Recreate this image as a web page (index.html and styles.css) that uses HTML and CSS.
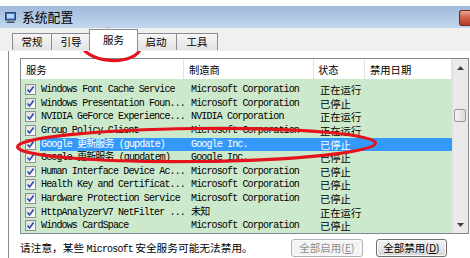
FILE: index.html
```html
<!DOCTYPE html>
<html lang="zh-CN">
<head>
    <meta charset="UTF-8">
    <title>系统配置</title>
    <link rel="stylesheet" href="styles.css">
</head>
<body>
    <div class="window">
        <div class="titlebar">
            <svg class="app-icon" width="11" height="11" viewBox="0 0 11 11">
                <rect x="0.5" y="0.5" width="10" height="7.5" fill="#3f6fb8" stroke="#24487c"/>
                <rect x="2" y="2" width="7" height="4.5" fill="#bcd6f2"/>
                <rect x="3" y="8" width="5" height="1.5" fill="#7a8594"/>
                <rect x="1.5" y="9.5" width="8" height="1.5" fill="#4d5663"/>
            </svg>
            <span class="title">系统配置</span>
            <div class="close"></div>
        </div>

        <div class="tabs">
            <div class="tab t-first">常规</div>
            <div class="tab">引导</div>
            <div class="tab active">服务</div>
            <div class="tab t-wide">启动</div>
            <div class="tab t-wide">工具</div>
        </div>

        <div class="panel">
            <div class="list">
                <div class="list-main">
                    <div class="list-head">
                        <div class="hcol h-name">服务</div>
                        <div class="hcol h-maker">制造商</div>
                        <div class="hcol h-state">状态</div>
                        <div class="hcol h-date">禁用日期</div>
                    </div>
                    <div class="list-body">
                        <div class="row">
                            <span class="check"><svg width="9" height="9" viewBox="0 0 9 9"><path d="M1.5 4.5 L3.6 7 L7.6 1.6" /></svg></span>
                            <div class="cells"><span class="name">Windows Font Cache Service</span><span class="maker">Microsoft Corporation</span><span class="state">正在运行</span></div>
                        </div>
                        <div class="row">
                            <span class="check"><svg width="9" height="9" viewBox="0 0 9 9"><path d="M1.5 4.5 L3.6 7 L7.6 1.6" /></svg></span>
                            <div class="cells"><span class="name">Windows Presentation Foun...</span><span class="maker">Microsoft Corporation</span><span class="state">已停止</span></div>
                        </div>
                        <div class="row">
                            <span class="check"><svg width="9" height="9" viewBox="0 0 9 9"><path d="M1.5 4.5 L3.6 7 L7.6 1.6" /></svg></span>
                            <div class="cells"><span class="name">NVIDIA GeForce Experience...</span><span class="maker">NVIDIA Corporation</span><span class="state">正在运行</span></div>
                        </div>
                        <div class="row">
                            <span class="check"><svg width="9" height="9" viewBox="0 0 9 9"><path d="M1.5 4.5 L3.6 7 L7.6 1.6" /></svg></span>
                            <div class="cells"><span class="name">Group Policy Client</span><span class="maker">Microsoft Corporation</span><span class="state">正在运行</span></div>
                        </div>
                        <div class="row selected">
                            <span class="check"><svg width="9" height="9" viewBox="0 0 9 9"><path d="M1.5 4.5 L3.6 7 L7.6 1.6" /></svg></span>
                            <div class="cells"><span class="name">Google 更新服务 (gupdate)</span><span class="maker">Google Inc.</span><span class="state">已停止</span></div>
                        </div>
                        <div class="row">
                            <span class="check"><svg width="9" height="9" viewBox="0 0 9 9"><path d="M1.5 4.5 L3.6 7 L7.6 1.6" /></svg></span>
                            <div class="cells"><span class="name">Google 更新服务 (gupdatem)</span><span class="maker">Google Inc.</span><span class="state">已停止</span></div>
                        </div>
                        <div class="row">
                            <span class="check"><svg width="9" height="9" viewBox="0 0 9 9"><path d="M1.5 4.5 L3.6 7 L7.6 1.6" /></svg></span>
                            <div class="cells"><span class="name">Human Interface Device Ac...</span><span class="maker">Microsoft Corporation</span><span class="state">已停止</span></div>
                        </div>
                        <div class="row">
                            <span class="check"><svg width="9" height="9" viewBox="0 0 9 9"><path d="M1.5 4.5 L3.6 7 L7.6 1.6" /></svg></span>
                            <div class="cells"><span class="name">Health Key and Certificat...</span><span class="maker">Microsoft Corporation</span><span class="state">已停止</span></div>
                        </div>
                        <div class="row">
                            <span class="check"><svg width="9" height="9" viewBox="0 0 9 9"><path d="M1.5 4.5 L3.6 7 L7.6 1.6" /></svg></span>
                            <div class="cells"><span class="name">Hardware Protection Service</span><span class="maker">Microsoft Corporation</span><span class="state">已停止</span></div>
                        </div>
                        <div class="row">
                            <span class="check"><svg width="9" height="9" viewBox="0 0 9 9"><path d="M1.5 4.5 L3.6 7 L7.6 1.6" /></svg></span>
                            <div class="cells"><span class="name">HttpAnalyzerV7 NetFilter ...</span><span class="maker">未知</span><span class="state">正在运行</span></div>
                        </div>
                        <div class="row">
                            <span class="check"><svg width="9" height="9" viewBox="0 0 9 9"><path d="M1.5 4.5 L3.6 7 L7.6 1.6" /></svg></span>
                            <div class="cells"><span class="name">Windows CardSpace</span><span class="maker">Microsoft Corporation</span><span class="state">已停止</span></div>
                        </div>
                    </div>
                </div>
                <div class="scrollbar">
                    <div class="arrow"><svg width="7" height="4" viewBox="0 0 7 4"><path d="M0 4 L3.5 0 L7 4 Z" fill="#404040"/></svg></div>
                    <div class="track"><div class="thumb"></div></div>
                    <div class="arrow"><svg width="7" height="4" viewBox="0 0 7 4"><path d="M0 0 L3.5 4 L7 0 Z" fill="#404040"/></svg></div>
                </div>
            </div>

            <div class="footer">
                <span class="note">请注意，某些 <span class="mono">Microsoft</span> 安全服务可能无法禁用。</span>
                <div class="buttons">
                    <button class="btn" disabled>全部启用(<u>E</u>)</button>
                    <button class="btn">全部禁用(<u>D</u>)</button>
                </div>
            </div>
        </div>
    </div>

    <svg class="marks" width="470" height="258" viewBox="0 0 470 258">
        <ellipse cx="111" cy="45" rx="29.5" ry="15.5" transform="rotate(4 111 45)" />
        <ellipse cx="196.5" cy="145" rx="179" ry="16.5" transform="rotate(-0.6 196.5 145)" />
    </svg>
</body>
</html>
```

FILE: styles.css
```css
body {
    margin: 0;
    width: 470px;
    height: 258px;
    overflow: hidden;
    position: relative;
    background-color: #f0f0f0;
    font-family: "Noto Sans CJK SC", sans-serif;
    color: #000;
}

.window {
    padding-top: 6px;
    background: #fff;
}

/* title bar */
.titlebar {
    height: 22px;
    display: flex;
    align-items: center;
    background: linear-gradient(#9fb9d9, #c3d8ef);
}

.app-icon {
    margin-left: 5px;
    margin-top: 1px;
}

.title {
    margin-left: 6px;
    font-size: 12.8px;
    line-height: 16px;
}

/* only the left edge of the close button is in view */
.close {
    margin-left: auto;
    align-self: flex-start;
    margin-top: 4px;
    width: 10px;
    height: 14px;
    border: 1px solid #6d2a20;
    border-right: none;
    border-radius: 3px 0 0 3px;
    background: linear-gradient(#e9a693, #d0634c 45%, #b93a26);
}

/* tabs */
.tabs {
    height: 23px;
    margin-bottom: -1px;
    display: flex;
    align-items: flex-end;
    background: #f0f0f0;
    position: relative;
    z-index: 1;
}

.tab {
    width: 38px;
    height: 16px;
    margin-bottom: 1px;
    margin-left: -1px;
    border: 1px solid #898c95;
    border-bottom: none;
    background: linear-gradient(#f6f6f6, #e3e3e3);
    font-size: 10.5px;
    line-height: 16px;
    text-align: center;
}

.t-first {
    margin-left: 12px;
}

.t-wide {
    width: 40px;
}

.tab.active {
    width: 47px;
    height: 21px;
    margin-bottom: 0;
    margin-left: -2px;
    margin-right: -2px;
    background: #fff;
    line-height: 19px;
    position: relative;
    z-index: 2;
}

/* panel */
.panel {
    margin-left: 8px;
    border-top: 1px solid #898c95;
    border-left: 1px solid #898c95;
    background: #fff;
    padding: 7px 0 0 11px;
    height: 200px;
}

.list {
    width: 447px;
    height: 174px;
    border: 1px solid #828790;
    display: flex;
}

.list-main {
    width: 431px;
    display: flex;
    flex-direction: column;
}

.list-head {
    height: 20px;
    display: grid;
    grid-template-columns: 163px 130px 51px 87px;
    background: #fff;
}

.hcol {
    border-right: 1px solid #e3e3e3;
    font-size: 10.3px;
    line-height: 22px;
    padding-left: 5px;
    white-space: nowrap;
}

.h-state {
    padding-left: 4px;
}

.list-body {
    flex: 1;
    background: #cde9cb;
    padding-top: 4px;
    overflow: hidden;
}

.row {
    height: 13.6px;
    display: flex;
    align-items: center;
}

.check {
    width: 9px;
    height: 9px;
    margin-left: 4px;
    margin-right: 4px;
    border: 1px solid #8e8f8f;
    background: linear-gradient(135deg, #dcdcdc, #fff);
    display: flex;
}

.check path {
    fill: none;
    stroke: #2d4fae;
    stroke-width: 1.7;
}

.cells {
    flex: 1;
    height: 13px;
    display: grid;
    grid-template-columns: 145px 130px 1fr;
    align-items: center;
    white-space: nowrap;
    overflow: hidden;
}

.row.selected .cells {
    background: #3399ff;
    color: #fff;
}

.name,
.maker {
    font-family: "Liberation Mono", "Noto Sans CJK SC", monospace;
    font-size: 10px;
    letter-spacing: -0.86px;
    line-height: 13px;
    overflow: hidden;
}

.name {
    padding-left: 1px;
}

.maker {
    padding-left: 6px;
}

.state {
    padding-left: 5px;
    font-size: 10.3px;
    line-height: 13px;
}

/* scrollbar */
.scrollbar {
    width: 16px;
    display: flex;
    flex-direction: column;
    background: #eaeaea;
    border-left: 1px solid #e0e0e0;
    box-sizing: border-box;
}

.arrow {
    height: 17px;
    display: flex;
    align-items: center;
    justify-content: center;
}

.track {
    flex: 1;
    padding-top: 33px;
}

.thumb {
    width: 12px;
    height: 13px;
    margin-left: 1px;
    border: 1px solid #979797;
    border-radius: 2px;
    box-sizing: border-box;
    background: linear-gradient(90deg, #f4f4f4, #dcdcdc);
}

/* footer */
.footer {
    height: 27px;
    display: flex;
    align-items: center;
    padding-right: 23px;
}

.note {
    font-size: 10.7px;
    white-space: nowrap;
}

.mono {
    font-family: "Liberation Mono", monospace;
    font-size: 10px;
    letter-spacing: -0.86px;
}

.buttons {
    margin-left: auto;
    display: flex;
    gap: 13px;
}

.btn {
    width: 72px;
    height: 18px;
    padding: 0;
    border: 1px solid #707070;
    border-radius: 3px;
    background: linear-gradient(#f3f3f3, #e6e6e6 50%, #d8d8d8);
    box-shadow: inset 0 0 0 1px #fbfbfb;
    font-family: "Noto Sans CJK SC", sans-serif;
    font-size: 10.5px;
    line-height: 15px;
    color: #000;
}

.btn + .btn {
    width: 71px;
}

.btn:disabled {
    border-color: #adb2b5;
    background: #f4f4f4;
    color: #8d8d8d;
}

/* red marks drawn over the screenshot */
.marks {
    position: absolute;
    top: 0;
    left: 0;
    pointer-events: none;
}

.marks ellipse {
    fill: none;
    stroke: #e3121b;
    stroke-width: 3.2;
}
```
